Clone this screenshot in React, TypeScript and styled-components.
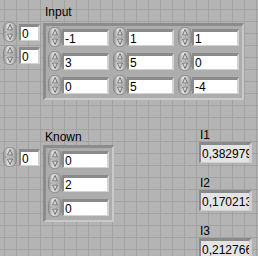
import styled, { createGlobalStyle } from 'styled-components';

const GlobalStyle = createGlobalStyle`
  html, body {
    margin: 0;
    padding: 0;
    background: #b4b4b4;
  }
`;

const Panel = styled.div`
  width: 258px;
  height: 256px;
  overflow: hidden;
  display: flex;
  flex-direction: column;
  background-color: #b4b4b4;
  background-image: linear-gradient(to right, #a2a2a2 1px, transparent 1px),
    linear-gradient(to bottom, #a2a2a2 1px, transparent 1px);
  background-size: 12px 12px;
  background-position: 4px 9px;
  font-family: 'Liberation Sans', Arial, sans-serif;
  font-size: 12px;
  color: #000;
`;

const Section = styled.div<{ $top: number }>`
  display: flex;
  align-items: flex-start;
  margin-top: ${(p) => p.$top}px;
`;

const IndexStack = styled.div`
  display: flex;
  flex-direction: column;
  gap: 3px;
  margin: 18px 0 0 3px;
`;

const ArrayGroup = styled.div`
  display: flex;
  flex-direction: column;
  margin-left: 3px;
`;

const Caption = styled.div<{ $gap: number }>`
  height: 16px;
  line-height: 16px;
  padding-left: 2px;
  margin-bottom: ${(p) => p.$gap}px;
  white-space: nowrap;
`;

const ArrayFrame = styled.div<{ $cols: number }>`
  display: grid;
  grid-template-columns: repeat(${(p) => p.$cols}, auto);
  column-gap: 4px;
  row-gap: 4px;
  padding: 1px 3px 3px 2px;
  background: #adadad;
  border-style: solid;
  border-width: 3px 2px 2px 3px;
  border-color: #8c8c8c #c9c9c9 #c9c9c9 #8c8c8c;
`;

const Numeric = styled.div<{ $gap: number }>`
  display: flex;
  align-items: center;
  gap: ${(p) => p.$gap}px;
`;

const Field = styled.div<{ $width: number }>`
  box-sizing: border-box;
  width: ${(p) => p.$width}px;
  height: 17px;
  padding-left: 1px;
  line-height: 14px;
  background: #fff;
  border-style: solid;
  border-width: 3px 2px 1px 2px;
  border-color: #8a8a8a #d2d2d2 #d2d2d2 #8a8a8a;
  white-space: nowrap;
  overflow: hidden;
`;

const IndicatorColumn = styled.div`
  display: flex;
  flex-direction: column;
  gap: 13px;
  margin: -1px 0 0 85px;
`;

const Indicator = styled.div`
  display: flex;
  flex-direction: column;
`;

const IndicatorLabel = styled.div`
  height: 14px;
  line-height: 14px;
  padding-left: 1px;
`;

const Readout = styled.div`
  box-sizing: border-box;
  width: 53px;
  height: 21px;
  padding: 2px 0 0 1px;
  line-height: 15px;
  background: #e4e4e4;
  border-style: solid;
  border-width: 3px 3px 1px 2px;
  border-color: #8a8a8a #cfcfcf #cfcfcf #8a8a8a;
  white-space: nowrap;
  overflow: hidden;
`;

const Spinner = () => (
  <svg width="14" height="20" viewBox="0 0 14 20">
    <defs>
      <linearGradient id="spin" x1="0" x2="1" y1="0" y2="0">
        <stop offset="0" stopColor="#8f8f8f" />
        <stop offset="0.35" stopColor="#e2e2e2" />
        <stop offset="0.7" stopColor="#c4c4c4" />
        <stop offset="1" stopColor="#8a8a8a" />
      </linearGradient>
    </defs>
    <rect x="0.5" y="0.5" width="13" height="19" rx="6" fill="url(#spin)" stroke="#8a8a8a" />
    <line x1="1" y1="10" x2="13" y2="10" stroke="#9a9a9a" />
    <path d="M7 2.5 L4.5 8 L9.5 8 Z" fill="none" stroke="#5a5a5a" strokeWidth="0.8" />
    <path d="M4.5 12 L9.5 12 L7 17.5 Z" fill="none" stroke="#5a5a5a" strokeWidth="0.8" />
  </svg>
);

const NumControl = ({ value, width, gap }: { value: string; width: number; gap: number }) => (
  <Numeric $gap={gap}>
    <Spinner />
    <Field $width={width}>{value}</Field>
  </Numeric>
);

const inputMatrix = ['-1', '1', '1', '3', '5', '0', '0', '5', '-4'];
const known = ['0', '2', '0'];
const results = [
  { label: 'I1', value: '0,382979' },
  { label: 'I2', value: '0,170213' },
  { label: 'I3', value: '0,212766' },
];

const App = () => {
  return (
    <Panel>
      <GlobalStyle />
      <Section $top={4}>
        <IndexStack>
          <NumControl value="0" width={21} gap={2} />
          <NumControl value="0" width={21} gap={2} />
        </IndexStack>
        <ArrayGroup>
          <Caption $gap={3}>Input</Caption>
          <ArrayFrame $cols={3}>
            {inputMatrix.map((v, i) => (
              <NumControl key={i} value={v} width={47} gap={0} />
            ))}
          </ArrayFrame>
        </ArrayGroup>
      </Section>
      <Section $top={29}>
        <IndexStack>
          <NumControl value="0" width={21} gap={2} />
        </IndexStack>
        <ArrayGroup>
          <Caption $gap={0}>Known</Caption>
          <ArrayFrame $cols={1}>
            {known.map((v, i) => (
              <NumControl key={i} value={v} width={47} gap={0} />
            ))}
          </ArrayFrame>
        </ArrayGroup>
        <IndicatorColumn>
          {results.map((r) => (
            <Indicator key={r.label}>
              <IndicatorLabel>{r.label}</IndicatorLabel>
              <Readout>{r.value}</Readout>
            </Indicator>
          ))}
        </IndicatorColumn>
      </Section>
    </Panel>
  );
};

export default App;
